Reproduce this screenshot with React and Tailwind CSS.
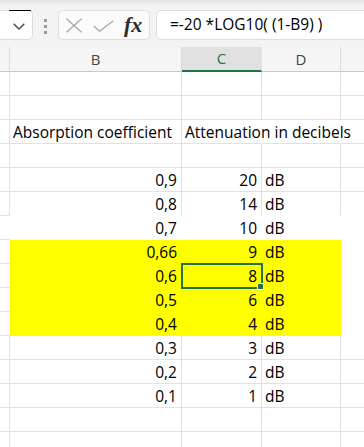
import React from 'react'

// rows 1..16 as seen in the sheet
const rows = [
  {},
  {},
  { B: 'Absorption coefficient', C: 'Attenuation in decibels', text: true },
  {},
  { B: '0,9', C: '20', D: 'dB' },
  { B: '0,8', C: '14', D: 'dB' },
  { B: '0,7', C: '10', D: 'dB' },
  { B: '0,66', C: '9', D: 'dB' },
  { B: '0,6', C: '8', D: 'dB' },
  { B: '0,5', C: '6', D: 'dB' },
  { B: '0,4', C: '4', D: 'dB' },
  { B: '0,3', C: '3', D: 'dB' },
  { B: '0,2', C: '2', D: 'dB' },
  { B: '0,1', C: '1', D: 'dB' },
  {},
  {},
]

const cols = ['A', 'B', 'C', 'D', 'E']

const fillOf = (r, c) => {
  if (r >= 8 && r <= 11 && ['B', 'C', 'D'].includes(c)) return 'yellow'
  if (r >= 8 && r <= 11 && c === 'E') return 'white'
  if (r === 7 && c !== 'A') return 'white'
  return null
}

const widthOf = {
  A: 'w-[10px]',
  B: 'w-[172px]',
  C: 'w-[80px]',
  D: 'w-[79px]',
  E: 'w-[60px]',
}

function Cell({ r, c, row }) {
  const fill = fillOf(r, c)
  const next = cols[cols.indexOf(c) + 1]
  const overflow = row.text && (c === 'C' || c === 'D')
  const right = !fill && !(next && fillOf(r, next)) && !overflow
  const bottom = !fill && !fillOf(r + 1, c)
  const value = row[c]
  const isNum = value && !row.text && c !== 'D'
  const selected = r === 9 && c === 'C'

  return (
    <div
      className={`relative shrink-0 h-full border-r border-b ${widthOf[c]} ${
        right ? 'border-r-[#e1e1e1]' : 'border-r-transparent'
      } ${bottom ? 'border-b-[#e1e1e1]' : 'border-b-transparent'} ${
        fill === 'yellow' ? 'bg-[#ffff00]' : 'bg-white'
      } flex items-end pb-[2px] ${isNum ? 'justify-end pr-[4px]' : 'pl-[3px]'}`}
    >
      {value && (
        <span className="relative z-[5] whitespace-nowrap leading-[18px] text-[15.5px] text-black">{value}</span>
      )}
      {selected && (
        <div className="absolute z-10 -left-px -top-px w-[82px] h-[26px] border-2 border-[#217346]">
          <div className="absolute left-[74px] top-[18px] w-[7px] h-[7px] bg-[#217346] border border-white" />
        </div>
      )}
    </div>
  )
}

function XIcon() {
  return (
    <svg width="18" height="15" viewBox="0 0 18 15" fill="none" stroke="#a6a6a6" strokeWidth="1.2">
      <path d="M1.5 0.8 L16.5 14.2 M16.5 0.8 L1.5 14.2" />
    </svg>
  )
}

function CheckIcon() {
  return (
    <svg width="21" height="12" viewBox="0 0 21 12" fill="none" stroke="#a6a6a6" strokeWidth="1.2">
      <path d="M0.8 6 L6.5 11.3 L20.3 0.7" />
    </svg>
  )
}

export default function App() {
  return (
    <div className="w-[364px] h-[447px] overflow-hidden bg-white font-['Open_Sans',sans-serif]">
      {/* formula bar */}
      <div className="flex items-start h-[47px] pt-[10px] bg-[linear-gradient(#e2e2e2,#f3f3f3_5px,#f3f3f3)]">
        <div className="relative shrink-0 w-[33px] h-[30px] bg-white border border-l-0 border-[#dcdcdc] rounded-r-[5px] flex items-center">
          <div className="absolute left-[9px] -top-px w-[22px] h-px bg-black" />
          <svg className="ml-[13px] mt-[3px]" width="12" height="7" viewBox="0 0 12 7" fill="none" stroke="#444" strokeWidth="1.3">
            <path d="M0.7 0.7 L6 6 L11.3 0.7" />
          </svg>
        </div>
        <div className="shrink-0 ml-[11px] mt-[9px] flex flex-col gap-[3px]">
          <div className="w-[3px] h-[3px] bg-[#9a9a9a]" />
          <div className="w-[3px] h-[3px] bg-[#9a9a9a]" />
          <div className="w-[3px] h-[3px] bg-[#9a9a9a]" />
        </div>
        <div className="shrink-0 ml-[11px] w-[92px] h-[30px] bg-[#fbfbfb] border border-[#dedede] rounded-[5px] flex items-center">
          <div className="ml-[6px] mt-[1px]">
            <XIcon />
          </div>
          <div className="ml-[10px] mt-[2px]">
            <CheckIcon />
          </div>
          <span className="ml-[10px] -mt-[1px] font-['Liberation_Serif',serif] italic font-bold text-[22px] leading-none text-[#2b2b2b]">
            fx
          </span>
        </div>
        <div className="shrink-0 ml-[6px] w-[230px] h-[30px] bg-white border border-[#dedede] rounded-[5px] flex items-center pl-[13px]">
          <span className="text-[15.5px] text-black whitespace-nowrap">=-20 *LOG10( (1-B9) )</span>
        </div>
      </div>

      {/* column headers */}
      <div className="flex h-[25px] bg-[#f5f5f5] text-[15px]">
        {cols.map((c) => (
          <div
            key={c}
            className={`shrink-0 h-full flex items-center justify-center border-r ${widthOf[c]} ${
              c === 'C'
                ? 'bg-[#e1e1e1] text-[#217346] border-b-2 border-b-[#217346] border-r-[#e1e1e1]'
                : 'text-[#444] border-b border-b-[#c9c9c9] border-r-[#dadada]'
            }`}
          >
            {c === 'A' || c === 'E' ? '' : c}
          </div>
        ))}
      </div>

      {/* rows */}
      {rows.map((row, i) => (
        <div key={i} className="flex h-[24px]">
          {cols.map((c) => (
            <Cell key={c} r={i + 1} c={c} row={row} />
          ))}
        </div>
      ))}
    </div>
  )
}
